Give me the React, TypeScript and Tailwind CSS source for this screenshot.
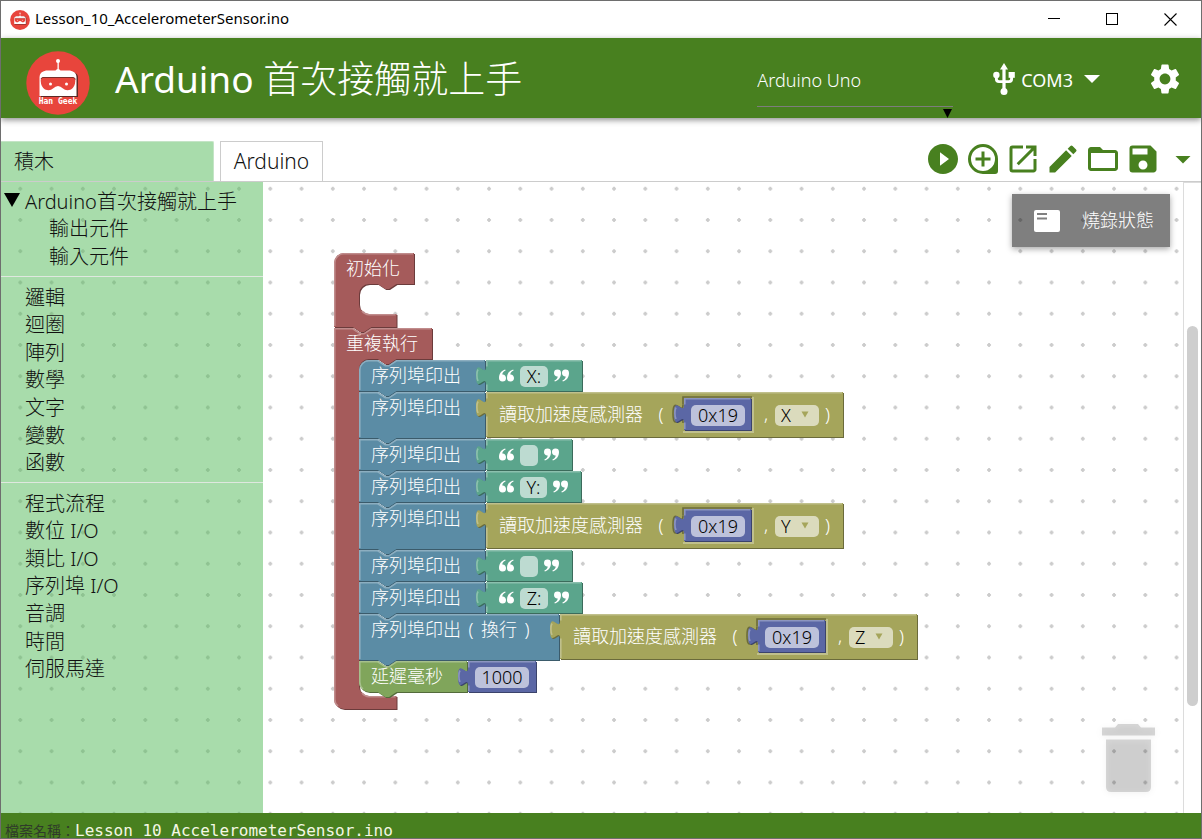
import { useState } from "react";
import type { ReactNode } from "react";
import {
  MdArrowDropDown,
  MdCreate,
  MdFolderOpen,
  MdOpenInNew,
  MdPlayCircleFilled,
  MdSave,
  MdSettings,
} from "react-icons/md";

type Tone = { fill: string; dark: string; light: string };

const RED: Tone = { fill: "#a55b5b", dark: "#6b3b3b", light: "#c08c8c" };
const BLUE: Tone = { fill: "#5b8ca5", dark: "#3b5b6b", light: "#8caec0" };
const TEAL: Tone = { fill: "#5ba58c", dark: "#3b6b5b", light: "#8cc0ae" };
const OLIVE: Tone = { fill: "#a5a55b", dark: "#6b6b3b", light: "#c0c08c" };
const INDIGO: Tone = { fill: "#5b67a5", dark: "#3b436b", light: "#8c95c0" };
const GREEN: Tone = { fill: "#80a55b", dark: "#536b3b", light: "#a6c08c" };

const NOTCH = "l 7.5,5 3.75,0 7.5,-5";
const NOTCH_BACK = "l -7.5,5 -3.75,0 -7.5,-5";
const TAB_UP = "c 0,-12.5 -10,10 -10,-9.375 s 10,3.125 10,-9.375";

function Shape({ tone, outline, light }: { tone: Tone; outline: string; light: string }) {
  return (
    <svg className="absolute left-0 top-0 h-px w-px overflow-visible" aria-hidden="true">
      <path d={outline} fill={tone.dark} transform="translate(1,1)" />
      <path d={outline} fill={tone.fill} />
      <path d={light} fill="none" stroke={tone.light} strokeWidth="1.6" />
    </svg>
  );
}

function StackShape({ tone, w, h, roundTop, roundBottom }: { tone: Tone; w: number; h: number; roundTop?: boolean; roundBottom?: boolean }) {
  const start = roundTop ? "M 0,10 A 10,10 0 0 1 10,0" : "M 0,0";
  const end = roundBottom ? `H 10 A 10,10 0 0 1 0,${h - 10} Z` : "H 0 Z";
  const outline = `${start} H 18.75 ${NOTCH} H ${w} V ${h} H 37.5 ${NOTCH_BACK} ${end}`;
  const lightStart = roundBottom ? `M 4,${h - 3} A 9,9 0 0 1 0.8,${h - 10}` : `M 0.8,${h - 1}`;
  const lightCorner = roundTop ? "V 10 A 9.2,9.2 0 0 1 10,0.8" : "V 0.8";
  return <Shape tone={tone} outline={outline} light={`${lightStart} ${lightCorner} H 18.75 ${NOTCH} H ${w - 1}`} />;
}

function ValueShape({ tone, w, h }: { tone: Tone; w: number; h: number }) {
  const outline = `M 0,0 H ${w} V ${h} H 0 V 25 ${TAB_UP} Z`;
  const light = `M 0.8,${h - 1} V 24.5 M -8,21 C -9.5,18 -9.5,12 -8,9.5 M 0.8,6.5 V 0.8 H ${w - 1}`;
  return <Shape tone={tone} outline={outline} light={light} />;
}

function StatementBlock({
  label,
  tone = BLUE,
  width,
  tall,
  first,
  last,
  children,
}: {
  label: ReactNode;
  tone?: Tone;
  width: number;
  tall?: boolean;
  first?: boolean;
  last?: boolean;
  children: ReactNode;
}) {
  return (
    <div className={tall ? "relative flex h-[47px] items-start" : "relative flex h-[32px] items-start"}>
      <StackShape tone={tone} w={width - 1} h={tall ? 46 : 31} roundTop={first} roundBottom={last} />
      <div className="relative flex h-[30px] items-center pl-3 whitespace-nowrap" style={{ width }}>
        {label}
      </div>
      {children}
    </div>
  );
}

function Quote({ closing }: { closing?: boolean }) {
  const mark = "M 0,9 C 0,4.6 2.4,1.6 6.2,0.4 L 6.6,1.4 C 4.4,2.4 3.4,3.8 3.3,5.4 C 5.3,5.2 7,6.8 7,8.9 A 3.5,3.5 0 0 1 0,9 Z";
  return (
    <svg viewBox="0 0 15 13" className="relative h-[13px] w-[15px] shrink-0 fill-white" aria-hidden="true">
      <g transform={closing ? "rotate(180 7.5 6.5)" : undefined}>
        <path d={mark} />
        <path d={mark} transform="translate(8,0)" />
      </g>
    </svg>
  );
}

function TextBlock({ value, width }: { value: string; width: number }) {
  const [text, setText] = useState(value);
  return (
    <div className="relative flex h-[31px] items-start gap-[6px] pl-[13px] pr-[14px] pt-[6px]">
      <ValueShape tone={TEAL} w={width + 68} h={31} />
      <span className="pt-[3px]"><Quote /></span>
      <input
        aria-label="文字"
        value={text}
        onChange={(e) => setText(e.target.value)}
        className="relative h-[21px] rounded-[5px] bg-[#bddbd1] p-0 pb-[2px] text-center leading-[20px] text-black outline-none"
        style={{ width }}
      />
      <span className="pt-[3px]"><Quote closing /></span>
    </div>
  );
}

function NumberBlock({ value, inset }: { value: string; inset?: boolean }) {
  const [num, setNum] = useState(value);
  return (
    <div className={inset ? "relative mt-[6px] flex h-[33px] w-[69px] items-center pl-[7px]" : "relative flex h-[31px] w-[69px] items-center pl-[7px]"}>
      {inset && (
        <svg className="absolute left-0 top-0 h-px w-px overflow-visible" aria-hidden="true">
          <path d="M -1,34 H 69 V -1" fill="none" stroke={OLIVE.light} strokeWidth="2" />
          <path d={`M 68,-1 H -1 V 6 M -1,25 ${TAB_UP}`} fill="none" stroke={OLIVE.dark} strokeWidth="1.6" />
        </svg>
      )}
      <ValueShape tone={INDIGO} w={inset ? 67 : 68} h={inset ? 32 : 31} />
      <input
        aria-label="數值"
        value={num}
        onChange={(e) => setNum(e.target.value)}
        className="relative top-px h-[21px] w-[54px] rounded-[5px] bg-[#bdc2db] p-0 pb-[2px] text-center leading-[20px] text-black outline-none"
      />
    </div>
  );
}

function SensorBlock({ axis }: { axis: string }) {
  return (
    <div className="relative flex h-[46px] w-[358px] items-start pl-[13px] whitespace-nowrap">
      <ValueShape tone={OLIVE} w={357} h={45} />
      <span className="relative flex h-[43px] w-[153px] items-center">讀取加速度感測器</span>
      <span className="relative flex h-[43px] w-[18px] items-center justify-center">(</span>
      <div className="ml-[14px]">
        <NumberBlock value="0x19" inset />
      </div>
      <span className="relative flex h-[43px] w-[22px] items-center justify-center pl-[4px]">,</span>
      <span className="relative mt-[13px] flex h-[21px] w-[44px] items-center rounded-[5px] bg-[#dbdbbd]">
        <select
          aria-label="軸向"
          defaultValue={axis}
          className="h-full w-full appearance-none bg-transparent pb-[2px] pl-[6px] leading-[20px] text-black outline-none"
        >
          <option>X</option>
          <option>Y</option>
          <option>Z</option>
        </select>
        <svg viewBox="0 0 8 7" className="pointer-events-none absolute right-[10px] top-[6px] h-[7px] w-[8px] fill-[#a5a55b]" aria-hidden="true">
          <path d="M0.5,0.5 H7.5 L4,6.5 Z" />
        </svg>
      </span>
      <span className="relative flex h-[43px] w-[17px] items-center justify-center">)</span>
    </div>
  );
}

function ContainerShape({ head, mouth, top, bottom }: { head: number; mouth: number; top?: boolean; bottom?: boolean }) {
  const m = 31 + mouth;
  const end = m + 13;
  const start = top ? "M 0,10 A 10,10 0 0 1 10,0 H" : `M 0,0 H 18.75 ${NOTCH} H`;
  const finish = bottom ? `H 10 A 10,10 0 0 1 0,${end - 10} Z` : `H 37.5 ${NOTCH_BACK} H 0 Z`;
  const outline = `${start} ${head} V 31 H 62.5 ${NOTCH_BACK} H 35 A 10,10 0 0 0 25,41 V ${m - 10} A 10,10 0 0 0 35,${m} H 62.5 V ${end} ${finish}`;
  const left = bottom ? `M 4,${end - 3} A 9,9 0 0 1 0.8,${end - 10}` : `M 0.8,${end - 1}`;
  const corner = top ? "V 10 A 9.2,9.2 0 0 1 10,0.8 H" : `V 0.8 H 18.75 ${NOTCH} H`;
  const light = `${left} ${corner} ${head - 1} M 28,${m - 3} A 10,10 0 0 0 35,${m + 0.8} H 61.5`;
  return <Shape tone={RED} outline={outline} light={light} />;
}

function Program() {
  return (
    <div className="absolute left-[71px] top-[71px] flex flex-col items-start text-[18px] leading-[24px] text-white">
      <div className="relative h-[75px]">
        <ContainerShape head={80} mouth={30} top />
        <span className="relative flex h-[30px] items-center pl-3">初始化</span>
      </div>
      <div className="relative">
        <ContainerShape head={98} mouth={337} bottom />
        <span className="relative flex h-[32px] items-start pl-3 pt-[3px]">重複執行</span>
        <div className="relative flex flex-col items-start pl-[25px]">
          <StatementBlock label="序列埠印出" width={127} first>
            <TextBlock value="X:" width={28} />
          </StatementBlock>
          <StatementBlock label="序列埠印出" width={127} tall>
            <SensorBlock axis="X" />
          </StatementBlock>
          <StatementBlock label="序列埠印出" width={127}>
            <TextBlock value="" width={18} />
          </StatementBlock>
          <StatementBlock label="序列埠印出" width={127}>
            <TextBlock value="Y:" width={27} />
          </StatementBlock>
          <StatementBlock label="序列埠印出" width={127} tall>
            <SensorBlock axis="Y" />
          </StatementBlock>
          <StatementBlock label="序列埠印出" width={127}>
            <TextBlock value="" width={18} />
          </StatementBlock>
          <StatementBlock label="序列埠印出" width={127}>
            <TextBlock value="Z:" width={28} />
          </StatementBlock>
          <StatementBlock
            width={201}
            tall
            label={
              <>
                序列埠印出
                <span className="w-[20px] text-center">(</span>
                換行
                <span className="w-[20px] text-center">)</span>
              </>
            }
          >
            <SensorBlock axis="Z" />
          </StatementBlock>
          <StatementBlock label="延遲毫秒" tone={GREEN} width={109} last>
            <NumberBlock value="1000" />
          </StatementBlock>
        </div>
      </div>
    </div>
  );
}

function RobotLogo({ className, label }: { className: string; label?: boolean }) {
  return (
    <svg viewBox="0 0 64 64" className={className} role="img" aria-label="Han Geek">
      <circle cx="32" cy="32" r="31.7" fill="#e8453c" />
      <path d="M15,46 V26 Q15,22 20,21 H46 Q52,22 52,26 V46 Z" fill="#5c2a26" />
      <path d="M31.5,10 H32.8 V19 H31.5 Z" fill="#fff" />
      <circle cx="32" cy="10" r="2" fill="#fff" />
      <path d="M29,20 Q32,16 35,20 Z M13.5,45 V26 Q13.5,21 20,19.6 H44 Q50.5,21 50.5,26 V45 Z" fill="#fff" />
      <path
        d="M17,26.5 H47 Q49.5,26.5 49.3,30 Q49,36 45,38.5 Q40,40.5 37,37.5 Q34.5,35 32,35 Q29.5,35 27,37.5 Q24,40.5 19,38.5 Q15,36 14.7,30 Q14.5,26.5 17,26.5 Z"
        fill="#e8453c"
      />
      <path d="M15,28 Q15.5,26.5 17,26.5 H47 Q49,26.5 49.3,28.5" fill="none" stroke="#7a2f2a" strokeWidth="1" />
      <circle cx="24.5" cy="33" r="1.5" fill="#fff" />
      <circle cx="40.5" cy="33" r="1.5" fill="#fff" />
      {label && (
        <text x="32" y="52.5" textAnchor="middle" fontSize="8" fontWeight="700" fontFamily="'DejaVu Sans Mono', monospace" fill="#fff">
          Han Geek
        </text>
      )}
    </svg>
  );
}

const LESSONS = ["輸出元件", "輸入元件"];
const BASICS = ["邏輯", "迴圈", "陣列", "數學", "文字", "變數", "函數"];
const HARDWARE = ["程式流程", "數位 I/O", "類比 I/O", "序列埠 I/O", "音調", "時間", "伺服馬達"];

function CategoryList({ items }: { items: string[] }) {
  return (
    <ul className="grid h-[193px] grid-rows-7 pl-[24px]">
      {items.map((name) => (
        <li key={name} className="flex items-center">
          <button type="button">{name}</button>
        </li>
      ))}
    </ul>
  );
}

function Toolbox() {
  return (
    <nav aria-label="積木分類" className="relative w-[262px] shrink-0 overflow-hidden bg-[#51b957]/50 pt-[6px] text-[20px] leading-[26px] text-[#111]">
      <div className="grid h-[83px] grid-rows-3">
        <button type="button" className="flex items-center gap-[5px] pl-[3px] whitespace-nowrap">
          <svg viewBox="0 0 16 14" className="mb-[4px] h-[14px] w-[16px] fill-black" aria-hidden="true">
            <path d="M0,0 H16 L8,14 Z" />
          </svg>
          Arduino首次接觸就上手
        </button>
        {LESSONS.map((name) => (
          <button key={name} type="button" className="pl-[48px] text-left">
            {name}
          </button>
        ))}
      </div>
      <hr className="mb-[7px] mt-[5px] border-[#dfe8df]" />
      <CategoryList items={BASICS} />
      <hr className="mb-[7px] mt-[5px] border-[#dfe8df]" />
      <CategoryList items={HARDWARE} />
    </nav>
  );
}

function CommentPlus() {
  return (
    <svg viewBox="0 0 24 24" className="size-9 fill-current" aria-hidden="true">
      <path
        fillRule="evenodd"
        d="M12,2 A10,10 0 0 0 12,22 H20 A2,2 0 0 0 22,20 V12 A10,10 0 0 0 12,2 Z M12,4 A8,8 0 0 1 12,20 A8,8 0 0 1 12,4 Z M11,7 V11 H7 V13 H11 V17 H13 V13 H17 V11 H13 V7 Z"
      />
    </svg>
  );
}

function UsbIcon() {
  return (
    <svg viewBox="0 0 22 32" className="mx-[6px] h-[32px] w-[22px] fill-white" aria-hidden="true">
      <path d="M11,0 L15,6.5 H12.6 V27 H9.4 V6.5 H7 Z" />
      <circle cx="11" cy="28.4" r="3.5" />
      <circle cx="3.4" cy="12" r="3.2" />
      <path d="M15.6,9 H21.8 V14.8 H15.6 Z" />
      <path d="M3.4,12 V16 Q3.4,18.6 6,18.6 H16 Q18.6,18.600 18.6,16 V12" fill="none" stroke="#fff" strokeWidth="2.9" />
    </svg>
  );
}

function Toolbar() {
  return (
    <div className="ml-auto mt-[23px] flex h-[36px] items-center gap-1 text-[#48801f]">
      <button type="button" aria-label="執行"><MdPlayCircleFilled className="size-9" /></button>
      <button type="button" aria-label="新增"><CommentPlus /></button>
      <button type="button" aria-label="開啟視窗"><MdOpenInNew className="size-9" /></button>
      <button type="button" aria-label="編輯"><MdCreate className="size-9" /></button>
      <button type="button" aria-label="開啟"><MdFolderOpen className="size-9" /></button>
      <button type="button" aria-label="儲存"><MdSave className="size-9" /></button>
      <button type="button" aria-label="更多"><MdArrowDropDown className="size-9" /></button>
    </div>
  );
}

function Workspace() {
  return (
    <section aria-label="工作區" className="relative flex min-w-0 flex-1">
      <div className="relative min-w-0 flex-1 overflow-hidden">
        <Program />
        <button
          type="button"
          className="absolute right-[13px] top-[12px] flex h-[53px] w-[158px] items-center gap-[22px] bg-black/50 pl-[22px] text-[18px] text-white shadow-[0_2px_6px_rgba(0,0,0,0.35)]"
        >
          <svg viewBox="0 0 26 22" className="h-[22px] w-[26px]" aria-hidden="true">
            <rect width="26" height="22" rx="2" fill="#fff" />
            <path d="M3,4 H13 M3,8.5 H13" stroke="#808080" strokeWidth="2" />
          </svg>
          燒錄狀態
        </button>
        <svg
          viewBox="0 0 54 70"
          className="absolute bottom-[20px] right-[28px] h-[70px] w-[54px] overflow-visible fill-black/15 drop-shadow-[0_1px_3px_rgba(0,0,0,0.35)]"
          role="img"
          aria-label="垃圾桶"
        >
          <path d="M1,4.5 H14 L17,1 H37 L40,4.5 H54 V12.5 H1 Z" />
          <path d="M5,16.5 H50 V64 Q50,69 45,69 H10 Q5,69 5,64 Z" />
        </svg>
      </div>
      <div className="w-[18px] shrink-0 border-l border-t border-[#dcdcdc] bg-white">
        <div className="ml-[3px] mt-[143px] h-[380px] w-[11px] rounded-full bg-[#cecece]" />
      </div>
    </section>
  );
}

export default function App() {
  return (
    <div className="flex h-screen flex-col overflow-hidden border border-[#6e6e6e] bg-white font-['Noto_Sans','Noto_Sans_CJK_TC',sans-serif] font-light">
      <div className="flex h-[37px] shrink-0 items-center bg-white pl-[9px] pr-[24px] text-[15px] text-black">
        <RobotLogo className="size-5" />
        <span className="ml-[5px] pb-[2px] font-normal">Lesson_10_AccelerometerSensor.ino</span>
        <div className="ml-auto flex items-center gap-[45px]">
          <button type="button" aria-label="最小化">
            <svg viewBox="0 0 13 13" className="size-[13px]" shapeRendering="crispEdges"><path d="M0,5.5 H12" stroke="#000" /></svg>
          </button>
          <button type="button" aria-label="最大化">
            <svg viewBox="0 0 13 13" className="size-[13px]" shapeRendering="crispEdges"><path d="M0.5,0.5 H11.5 V11.5 H0.5 Z" fill="none" stroke="#000" /></svg>
          </button>
          <button type="button" aria-label="關閉">
            <svg viewBox="0 0 13 13" className="size-[13px]"><path d="M0.5,0.5 L12.5,12.5 M12.5,0.5 L0.5,12.5" stroke="#000" strokeWidth="1.1" /></svg>
          </button>
        </div>
      </div>

      <header className="relative z-10 flex h-[80px] shrink-0 items-center bg-[#48801f] pl-[25px] pr-[18px] text-white shadow-[0_2px_6px_rgba(0,0,0,0.45)]">
        <RobotLogo className="mt-[9px] size-16 shrink-0" label />
        <h1 className="ml-[25px] mt-[2px] text-[37px] leading-[48px] whitespace-nowrap">
          <span className="font-normal">Arduino</span> 首次接觸就上手
        </h1>
        <div className="relative ml-auto mt-[16px] h-[64px] w-[196px]">
          <select aria-label="開發板" className="h-[53px] w-full appearance-none border-b border-[#7d7d7d] bg-transparent text-[18px] text-white outline-none">
            <option>Arduino Uno</option>
          </select>
          <svg viewBox="0 0 9 9" className="pointer-events-none absolute bottom-0 right-px size-[9px]" aria-hidden="true">
            <path d="M0,0 H9 L4.5,9 Z" fill="#000" />
          </svg>
        </div>
        <button type="button" className="ml-[34px] mt-[2px] flex items-center text-[18px] font-normal">
          <UsbIcon />
          <span className="pt-[2px]">COM3</span>
          <svg viewBox="0 0 16 8" className="ml-[11px] h-[8px] w-[16px] fill-white" aria-hidden="true"><path d="M0,0 H16 L8,8 Z" /></svg>
        </button>
        <button type="button" aria-label="設定" className="ml-[47px] mt-[2px]">
          <MdSettings className="size-9" />
        </button>
      </header>

      <div className="flex h-[64px] shrink-0 items-end border-b border-[#cccccc]">
        <button type="button" className="h-[40px] w-[213px] rounded-tr-[2px] border-r border-t border-[#c4e4c6] bg-[#a8dcab] pl-[13px] text-left text-[20px] text-[#111]">
          積木
        </button>
        <button type="button" className="ml-[6px] h-[40px] w-[103px] border border-b-0 border-[#cccccc] text-[21px] text-[#111]">
          Arduino
        </button>
        <div className="flex flex-1 self-start">
          <Toolbar />
        </div>
      </div>

      <main className="relative flex min-h-0 flex-1">
        <svg className="absolute inset-0 h-full w-full" aria-hidden="true">
          <defs>
            <pattern id="dots" x="3.7" y="-8.9" width="31.25" height="31.25" patternUnits="userSpaceOnUse">
              <path d="M13.7,15.6 H17.5 M15.6,13.7 V17.5" stroke="#cccccc" strokeWidth="2" />
            </pattern>
          </defs>
          <rect width="100%" height="100%" fill="url(#dots)" />
        </svg>
        <Toolbox />
        <Workspace />
      </main>

      <footer className="flex h-[25px] shrink-0 items-start overflow-hidden bg-[#48801f] pl-[4px] pt-[11px] leading-[14px] whitespace-nowrap">
        <span className="text-[14px] font-normal text-[#2f3a2a]">檔案名稱：</span>
        <span className="font-['DejaVu_Sans_Mono',monospace] text-[16px] font-normal text-[#f4f7e4]">Lesson_10_AccelerometerSensor.ino</span>
      </footer>
    </div>
  );
}
